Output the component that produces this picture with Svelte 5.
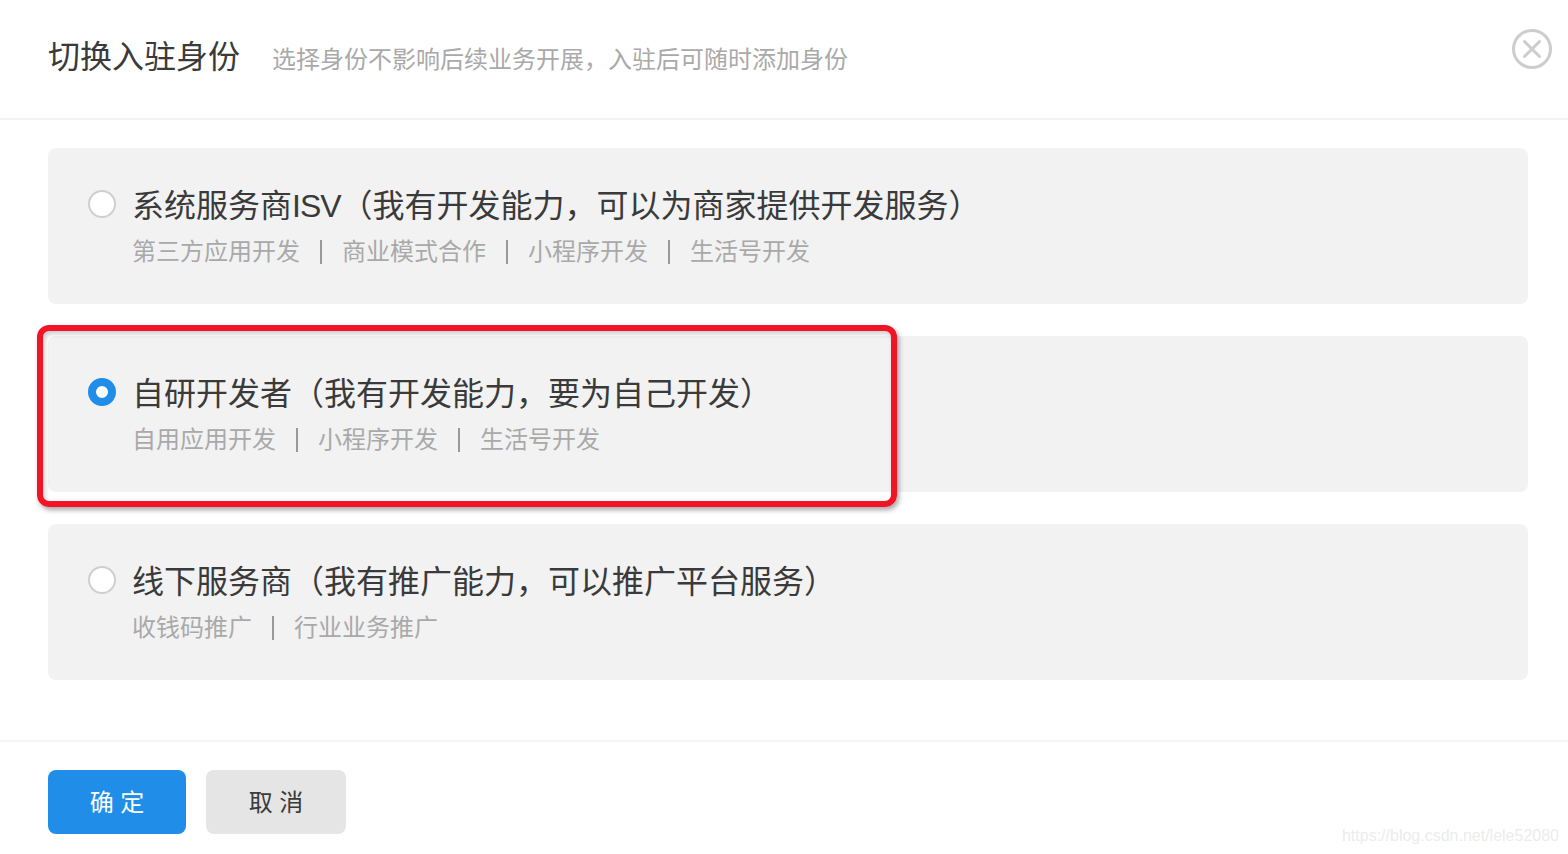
<script>
  const options = [
    {
      name: '系统服务商',
      code: 'ISV',
      note: '（我有开发能力，可以为商家提供开发服务）',
      tags: ['第三方应用开发', '商业模式合作', '小程序开发', '生活号开发'],
      checked: false
    },
    {
      name: '自研开发者',
      code: '',
      note: '（我有开发能力，要为自己开发）',
      tags: ['自用应用开发', '小程序开发', '生活号开发'],
      checked: true
    },
    {
      name: '线下服务商',
      code: '',
      note: '（我有推广能力，可以推广平台服务）',
      tags: ['收钱码推广', '行业业务推广'],
      checked: false
    }
  ];
</script>

<div class="dialog">
  <header class="head">
    <h1>切换入驻身份</h1>
    <span class="hint">选择身份不影响后续业务开展，入驻后可随时添加身份</span>
    <svg class="close" width="42" height="42" viewBox="0 0 42 42" fill="none" stroke="#cdcdcd" stroke-width="3" stroke-linecap="round">
      <circle cx="21" cy="21" r="18.5" />
      <path d="M13.5 13.5 28.5 28.5M28.5 13.5 13.5 28.5" />
    </svg>
  </header>

  <div class="list">
    {#each options as opt}
      <div class="card">
        <span class="radio" class:checked={opt.checked}></span>
        <div class="body">
          <div class="title">{opt.name}<span class="code">{opt.code}</span>{opt.note}</div>
          <div class="tags">
            {#each opt.tags as tag, i}
              {#if i > 0}<i class="sep"></i>{/if}
              <span>{tag}</span>
            {/each}
          </div>
        </div>
      </div>
    {/each}
  </div>

  <footer class="foot">
    <button class="btn primary">确 定</button>
    <button class="btn">取 消</button>
  </footer>

  <div class="mark"></div>
  <div class="watermark">https://blog.csdn.net/lele52080</div>
</div>

<style>
  :global(body) {
    background: #fff;
    margin: 0;
  }
  .dialog {
    font-family: "Liberation Sans", "Noto Sans CJK SC", sans-serif;
    height: 854px;
    overflow: hidden;
    position: relative;
    width: 1568px;
  }
  .head {
    align-items: flex-start;
    border-bottom: 2px solid #f4f4f4;
    box-sizing: border-box;
    display: flex;
    gap: 32px;
    height: 120px;
    padding: 32px 48px 0;
  }
  h1 {
    color: #3a3a3a;
    font-size: 32px;
    font-weight: 400;
    line-height: 46px;
    margin: 2px 0 0;
  }
  .hint {
    color: #a9a9a9;
    font-size: 24px;
    line-height: 34px;
    margin-top: 11px;
  }
  .close {
    position: absolute;
    right: 15px;
    top: 28px;
  }
  .list {
    display: flex;
    flex-direction: column;
    gap: 32px;
    padding: 28px 40px 60px 48px;
  }
  .card {
    background: #f2f2f2;
    border-radius: 8px;
    box-sizing: border-box;
    display: flex;
    gap: 16px;
    height: 156px;
    padding: 35px 40px 0;
  }
  .radio {
    background: #fff;
    border: 2px solid #cfcfcf;
    border-radius: 50%;
    box-sizing: border-box;
    flex: none;
    height: 28px;
    margin-top: 7px;
    width: 28px;
  }
  .radio.checked {
    border: 8px solid #208ee8;
  }
  .title {
    color: #3a3a3a;
    font-size: 32px;
    line-height: 46px;
  }
  .code {
    letter-spacing: -1px;
  }
  .tags {
    align-items: center;
    color: #a9a9a9;
    display: flex;
    font-size: 24px;
    gap: 20px;
    line-height: 36px;
    margin-top: 5px;
  }
  .sep {
    background: #999;
    height: 24px;
    width: 2px;
  }
  .foot {
    border-top: 2px solid #f4f4f4;
    display: flex;
    gap: 20px;
    padding: 28px 48px 0;
  }
  .btn {
    background: #e5e5e5;
    border: 0;
    border-radius: 8px;
    color: #3a3a3a;
    font-family: inherit;
    font-size: 24px;
    height: 64px;
    padding: 0 0 4px;
    width: 140px;
  }
  .btn.primary {
    background: #208ee8;
    color: #fff;
    width: 138px;
  }
  .mark {
    border: 6px solid #f01426;
    border-radius: 12px;
    box-shadow: 2px 3px 5px rgba(0, 0, 0, 0.35), inset 2px 3px 5px rgba(0, 0, 0, 0.2);
    box-sizing: border-box;
    height: 182px;
    left: 37px;
    position: absolute;
    top: 325px;
    width: 860px;
  }
  .watermark {
    bottom: 9px;
    color: #ececec;
    font-family: "Liberation Sans", sans-serif;
    font-size: 16px;
    position: absolute;
    right: 9px;
  }
</style>
